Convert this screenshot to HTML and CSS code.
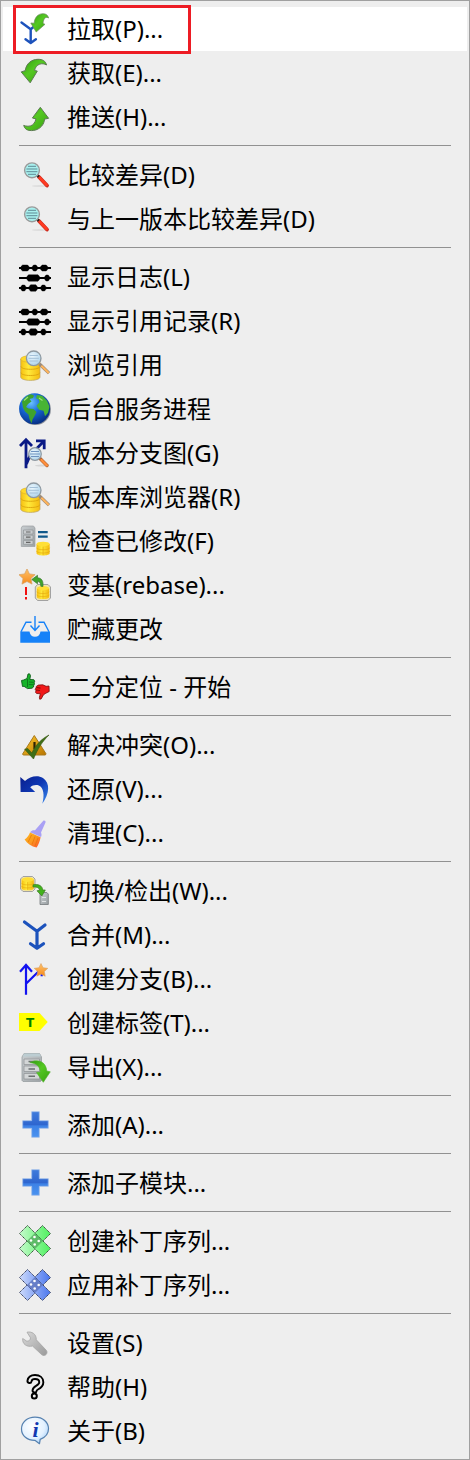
FILE: index.html
```html
<!DOCTYPE html>
<html lang="zh-CN">
<head>
<meta charset="utf-8">
<meta name="viewport" content="width=device-width, initial-scale=1">
<title>TortoiseGit</title>
<link rel="stylesheet" href="styles.css">
</head>
<body>
<svg class="sprite" aria-hidden="true">
  <defs>
    <linearGradient id="green" x1="0" y1="0" x2="1" y2="1"><stop offset="0" stop-color="#2f9a10"/><stop offset=".45" stop-color="#55c822"/><stop offset="1" stop-color="#37a010"/></linearGradient>
    <linearGradient id="gold" x1="0" x2="1" y1="0" y2="0"><stop offset="0" stop-color="#f6c010"/><stop offset=".4" stop-color="#ffe93a"/><stop offset="1" stop-color="#f4ba10"/></linearGradient>
    <linearGradient id="steel" x1="0" x2="1" y1="0" y2="1"><stop offset="0" stop-color="#c9ced1"/><stop offset="1" stop-color="#9ba1a4"/></linearGradient>
    <linearGradient id="star" x1="0" x2="0" y1="0" y2="1"><stop offset="0" stop-color="#ffc36a"/><stop offset="1" stop-color="#f58a1c"/></linearGradient>
    <linearGradient id="plus" x1="0" x2="0" y1="0" y2="1"><stop offset="0" stop-color="#3f7bdc"/><stop offset=".5" stop-color="#2f66cf"/><stop offset=".56" stop-color="#3d82e6"/><stop offset="1" stop-color="#4a93f0"/></linearGradient>
    <linearGradient id="undo" x1="0" x2="1" y1="0" y2="1"><stop offset="0" stop-color="#0a1f8e"/><stop offset=".5" stop-color="#0e38b4"/><stop offset="1" stop-color="#3c8cf0"/></linearGradient>
    <linearGradient id="bristle" x1="0" x2="1" y1="0" y2="1"><stop offset="0" stop-color="#ffb61c"/><stop offset=".5" stop-color="#fb9a20"/><stop offset="1" stop-color="#ff5030"/></linearGradient>
    <linearGradient id="warn" x1="0" x2="1" y1="0" y2="1"><stop offset="0" stop-color="#ffc92a"/><stop offset="1" stop-color="#b87400"/></linearGradient>
    <linearGradient id="wrench" x1="0" x2="1" y1="0" y2="1"><stop offset="0" stop-color="#d9d9d9"/><stop offset="1" stop-color="#9a9a9a"/></linearGradient>
    <radialGradient id="lens" cx=".4" cy=".35" r=".7"><stop offset="0" stop-color="#eaf6fd"/><stop offset="1" stop-color="#acd2ea"/></radialGradient>
    <radialGradient id="ocean" cx=".38" cy=".3" r=".75"><stop offset="0" stop-color="#6cc4ff"/><stop offset=".45" stop-color="#1667d6"/><stop offset="1" stop-color="#062a7c"/></radialGradient>
    <radialGradient id="bubble" cx=".4" cy=".35" r=".75"><stop offset="0" stop-color="#ffffff"/><stop offset=".6" stop-color="#e3f1ff"/><stop offset="1" stop-color="#9fcbf7"/></radialGradient>
    <linearGradient id="patch-green" x1="0" x2="1" y1="0" y2="0"><stop offset="0" stop-color="#c4fbcb"/><stop offset="1" stop-color="#4ff05f"/></linearGradient>
    <linearGradient id="patch-blue" x1="0" x2="1" y1="0" y2="0"><stop offset="0" stop-color="#ccdafc"/><stop offset="1" stop-color="#4a76ee"/></linearGradient>
  </defs>

  <symbol id="i-diff" viewBox="0 0 32 32">
    <ellipse cx="21" cy="27" rx="8" ry="1" fill="#dedede"/>
    <path d="M20 18 28 26.500" stroke="#c8281c" stroke-width="3.800" stroke-linecap="round"/>
    <path d="M20.500 18.500 27.600 26" stroke="#ff3b22" stroke-width="2.600" stroke-linecap="round"/>
    <path d="m18 16 1.800 1.800" stroke="#222" stroke-width="2.600"/>
    <circle cx="13" cy="11.300" r="7.400" fill="#a8f0ee" stroke="#9a9a9a" stroke-width="1.400"/>
    <path d="M9 7.300h8M7.400 10h11M7.400 12.700h11M9 15.300h8" stroke="#5f8a94" stroke-width="1"/>
  </symbol>

  <symbol id="i-log" viewBox="0 0 32 32">
    <path d="M0 7h32M0 17h32M0 27h32" stroke="#000" stroke-width="2"/>
    <path d="M3.600 4h5L10 5.500v3L8.600 10h-5L2 8.500v-3zM14.600 4H17l1.300 1.500v3L17 10h-2.400l-1.300-1.500v-3zM23.200 4h4l1.400 1.500v3L27.200 10h-4l-1.600-1.500v-3zM9.500 13.800H19l1.500 1.700v3L19 20.200H9.500L8 18.500v-3zM27 14h2.200l1.200 1.500v3L29.200 20H27l-1.200-1.500v-3zM3.200 24h2.400l1.200 1.500v3L5.600 30H3.200L2 28.500v-3zM11.600 23.800h5.200l1.400 1.600v3.200l-1.400 1.600h-5.200l-1.400-1.600v-3.200zM23.200 24h2.400l1.200 1.500v3L25.600 30h-2.400L22 28.500v-3z" fill="#000" stroke="#000" stroke-width=".4"/>
  </symbol>

  <symbol id="i-repo" viewBox="0 0 32 32">
    <path d="M1.700 10v18c0 2 4.300 3.400 9.700 3.400S21 30 21 28V10z" fill="url(#gold)" stroke="#b9a060" stroke-width=".7"/>
    <ellipse cx="11.400" cy="10" rx="9.700" ry="3.400" fill="#ffd92a" stroke="#d8ac30" stroke-width=".6"/>
    <path d="M2 17.300c0 2 4.300 3 9.400 3s9.400-1 9.400-3M2 23.500c0 2 4.300 3 9.400 3s9.400-1 9.400-3" fill="none" stroke="#dba40c" stroke-width=".9"/>
    <path d="m20.500 15 9.500 9.200" stroke="#9b8a7a" stroke-width="3.200"/>
    <path d="m22.300 16.800 7.500 7.200" stroke="#ffb45a" stroke-width="2"/>
    <circle cx="14.700" cy="9.300" r="7.300" fill="url(#lens)" stroke="#8e98a0" stroke-width="1.300"/>
    <path d="M10.500 6.500h8.400M9.500 9.300h10.400M10.500 12h8.400" stroke="#a3c0d8" stroke-width="1"/>
  </symbol>

  <symbol id="i-db" viewBox="0 0 16 16">
    <path d="M1 3v10c0 1.400 3 2.400 7 2.400s7-1 7-2.400V3z" fill="url(#gold)"/>
    <ellipse cx="8" cy="3" rx="7" ry="2.400" fill="#ffdf36"/>
    <path d="M1 7c0 1.400 3 2.200 7 2.200S15 8.400 15 7M1 10.500c0 1.400 3 2.200 7 2.200s7-.8 7-2.200M8 6v9" fill="none" stroke="#e6ae10" stroke-width=".8"/>
  </symbol>

  <symbol id="i-star" viewBox="-10 -10 20 20">
    <path d="m0-9 2.700 5.600 6.300.8-4.600 4.300 1.200 6.200L0 5l-5.600 2.900 1.200-6.200L-9-2.600l6.300-.8z" fill="url(#star)" stroke="#d8a060" stroke-width=".8"/>
  </symbol>

  <symbol id="i-plus" viewBox="0 0 32 32">
    <path d="M12.700 2.700h7.600v9h9v7.600h-9v9h-7.600v-9h-9v-7.600h9z" fill="url(#plus)" stroke="#9dbbe8" stroke-width=".8"/>
  </symbol>
</svg>

<ul class="menu" role="menu" aria-label="TortoiseGit">
  <li class="entry marked" role="none"><button class="item current" type="button" role="menuitem">
    <svg class="icon" viewBox="0 0 32 32" aria-hidden="true"><path d="m2.500 9.500 9.200 6.700 5-4M11.700 16v13.500M6.500 26.300l5.200 3.700 5.200-3.700" fill="none" stroke="#1c52bc" stroke-width="2.400" stroke-linecap="round" stroke-linejoin="round"/><path d="M29.600 5C27 3.400 24.500 4.800 24 10.500l2 .8L17.200 19l-5.400-9 3.400.2C15.500 4.500 19 .7 24 .7c3 0 5 1.500 5.600 4.300z" fill="url(#green)" stroke="#6d8a62" stroke-width=".7"/></svg>
    <span class="label">拉取(P)...</span></button></li>
  <li class="entry" role="none"><button class="item" type="button" role="menuitem">
    <svg class="icon" viewBox="0 0 32 32" aria-hidden="true"><path d="M27.500 8C23.500 5.500 17 6.500 15.500 13.500l2.800.6L11.200 25.800 2.200 14.900l4-1.200C7.200 6.500 12.500 2.300 19 2.300c4.500 0 7.700 1.700 8.500 5.700z" fill="url(#green)" stroke="#5c7a52" stroke-width="1"/></svg>
    <span class="label">获取(E)...</span></button></li>
  <li class="entry" role="none"><button class="item" type="button" role="menuitem">
    <svg class="icon" viewBox="0 0 32 32" aria-hidden="true"><path d="m21.300 6.300 8.300 11-4 .8c-.6 7.300-7 11.600-13.100 11.500-4.300 0-7-1.600-7.800-5.200 4.300 1.600 10.300 1.600 12.300-6.500L13.400 17z" fill="url(#green)" stroke="#5c7a52" stroke-width="1"/></svg>
    <span class="label">推送(H)...</span></button></li>
  <li class="separator" role="separator"></li>
  <li class="entry" role="none"><button class="item" type="button" role="menuitem"><svg class="icon" aria-hidden="true"><use href="#i-diff"/></svg><span class="label">比较差异(D)</span></button></li>
  <li class="entry" role="none"><button class="item" type="button" role="menuitem"><svg class="icon" aria-hidden="true"><use href="#i-diff"/></svg><span class="label">与上一版本比较差异(D)</span></button></li>
  <li class="separator" role="separator"></li>
  <li class="entry" role="none"><button class="item" type="button" role="menuitem"><svg class="icon" aria-hidden="true"><use href="#i-log"/></svg><span class="label">显示日志(L)</span></button></li>
  <li class="entry" role="none"><button class="item" type="button" role="menuitem"><svg class="icon" aria-hidden="true"><use href="#i-log"/></svg><span class="label">显示引用记录(R)</span></button></li>
  <li class="entry" role="none"><button class="item" type="button" role="menuitem"><svg class="icon" aria-hidden="true"><use href="#i-repo"/></svg><span class="label">浏览引用</span></button></li>
  <li class="entry" role="none"><button class="item" type="button" role="menuitem">
    <svg class="icon" viewBox="0 0 32 32" aria-hidden="true"><circle cx="16.400" cy="16.500" r="15.500" fill="#8d939c"/><circle cx="15.600" cy="15.800" r="15.500" fill="url(#ocean)"/><path d="M3 8.500C5.500 4.500 9 1.800 12 1.300l3 1.200-1 2.500-3.500 1 2 2.500-3.500 2.500-2 3 2.500 1.500 5 .5 3 3-2 4-2 3.500-1 4-2-4.500-1-4.500-3.500-3-2-4z" fill="#3fa32c"/><path d="m18 2 5 .8 5 5 2.500 6-1.500 6-3 3.500-1.500-5.500-4.500-1-2.500-4 3-3.500-1-3-2.500-1z" fill="#48b434"/><path d="M5 7.500 9 4M20 5l3.500 2.500" stroke="#9be07a" stroke-width="1.200"/></svg>
    <span class="label">后台服务进程</span></button></li>
  <li class="entry" role="none"><button class="item" type="button" role="menuitem">
    <svg class="icon" viewBox="0 0 32 32" aria-hidden="true"><path d="M7 31.300V3M1 9l6-6.200L13 9M17 3.800h8.200v8.500M24.500 4.600 11 18.500 7.500 27" fill="none" stroke="#0a1a86" stroke-width="2.800"/><ellipse cx="22" cy="28.600" rx="6" ry="1" fill="#d6d6d6"/><path d="m21 21.500 7 7" stroke="#b0602c" stroke-width="3.400" stroke-linecap="round"/><path d="m22.500 23 5.300 5.300" stroke="#ff8f3c" stroke-width="2.400" stroke-linecap="round"/><circle cx="16" cy="17" r="6.300" fill="url(#lens)" stroke="#8e98a0" stroke-width="1.200"/><path d="M12 14.500h8M11 17h10M12 19.500h8" stroke="#6e93c0" stroke-width="1.100"/></svg>
    <span class="label">版本分支图(G)</span></button></li>
  <li class="entry" role="none"><button class="item" type="button" role="menuitem"><svg class="icon" aria-hidden="true"><use href="#i-repo"/></svg><span class="label">版本库浏览器(R)</span></button></li>
  <li class="entry" role="none"><button class="item" type="button" role="menuitem">
    <svg class="icon" viewBox="0 0 32 32" aria-hidden="true"><path d="M3.500 1h11L16 3v18.500H2.300V3z" fill="url(#steel)" stroke="#9b9fa2" stroke-width=".7"/><path d="M4.500 5h9.500v4H4.500zM4.500 10.200h9.500v4H4.500zM4.500 15.400h9.500v4H4.500z" fill="#c9cdcf" stroke="#8f9396" stroke-width=".7"/><path d="M7 7h4.500M7 12.200h4.500M7 17.400h4.500" stroke="#666" stroke-width="1.200"/><path d="M19 7.200h9.700M19 11.700h9.700" stroke="#10588a" stroke-width="2.200"/><use href="#i-db" x="16.600" y="15.600" width="15" height="16"/></svg>
    <span class="label">检查已修改(F)</span></button></li>
  <li class="entry" role="none"><button class="item" type="button" role="menuitem">
    <svg class="icon" viewBox="0 0 32 32" aria-hidden="true"><use href="#i-star" x="-1" y="-1" width="18" height="18"/><path d="M7 18v8M7 28v2.400" stroke="#f01010" stroke-width="2"/><path d="M18.500 15.500H29l2.500 2.500v11L29 31.500H18.500L16.300 29V18z" fill="#efe3b0" stroke="#a2a2a2" stroke-width="1"/><use href="#i-db" x="17" y="16" width="14" height="15"/><path d="m12.800 10.500 5.700-4.200v2.500c4 .2 6 3 5.500 8.700l-2.200-.2c0-3.300-1-4.800-3.300-4.800v2.300z" fill="#3fa52a" stroke="#3d7530" stroke-width=".7"/></svg>
    <span class="label">变基(rebase)...</span></button></li>
  <li class="entry" role="none"><button class="item" type="button" role="menuitem">
    <svg class="icon" viewBox="0 0 32 32" aria-hidden="true"><path d="M12.500 9.200H7L2 18.800M19.500 9.200H25l5 9.600M16 3v14.500M11.500 12.500l4.500 5 4.500-5" fill="none" stroke="#1682f8" stroke-width="1.400"/><path d="M1.300 18.500h9.200c.5 3.600 2.500 5.200 5.500 5.200s5-1.600 5.500-5.200H31v11.300H1.300z" fill="#1682f8"/></svg>
    <span class="label">贮藏更改</span></button></li>
  <li class="separator" role="separator"></li>
  <li class="entry" role="none"><button class="item" type="button" role="menuitem">
    <svg class="icon" viewBox="0 0 32 32" aria-hidden="true"><path d="m2.500 9.500 2.200-.5L8 7.500l1-4.500 1.500-.2 1 1.700-.7 4 4 .2.900 1.500-.5 1.500.2 1.500-.7 1.300-.2 1.500-1.500 1.200-4.500.4-3.500-2.300-1.500.2z" fill="#14b428" stroke="#0f5c18" stroke-width=".9"/><path d="m10 11 4.700.3M9.800 13.500l4.800.3M8.500 8v8" stroke="#0b6a16" stroke-width=".8"/><path d="m30 15 .2 5.500-3.300 1.700-2.400 1.500-2.300 4.200-1.500.3-.3-2 1-3.500-3.800-.2-1.100-1.200.5-1.500-.8-1.500.8-1.300.3-1.600 2-1.300 4.500-.3 3.300 1.500z" fill="#f01818" stroke="#7a0c0c" stroke-width=".8"/><path d="m17.500 16.500 4 .7M17 19l4 .5" stroke="#8a0c0c" stroke-width="1.200"/></svg>
    <span class="label">二分定位 - 开始</span></button></li>
  <li class="separator" role="separator"></li>
  <li class="entry" role="none"><button class="item" type="button" role="menuitem">
    <svg class="icon" viewBox="0 0 32 32" aria-hidden="true"><path d="M15.300 6.500 27 24.800l-.6 1.200H4.200L3.600 25z" fill="url(#warn)" stroke="#a87a1c" stroke-width="1" stroke-linejoin="round"/><path d="M15.500 13v7" stroke="#2b2205" stroke-width="2.200"/><path d="m5.600 20.200 3.200-.7 4 4.500C17 15.500 22.500 9.800 30 6c-7 6.800-11 13.500-15.500 24z" fill="#3f6f18" stroke="#35550f" stroke-width=".6"/></svg>
    <span class="label">解决冲突(O)...</span></button></li>
  <li class="entry" role="none"><button class="item" type="button" role="menuitem">
    <svg class="icon" viewBox="0 0 32 32" aria-hidden="true"><path d="m1.300 3.900 4.700 4C11 3.300 18.500 1.600 24 5c7.500 5 6.500 16-.7 25.700 2.400-8.200 1.500-16.200-3.500-18.200-3-1-6.300-.3-8.600 1.700l5 4.800H1.600z" fill="url(#undo)"/></svg>
    <span class="label">还原(V)...</span></button></li>
  <li class="entry" role="none"><button class="item" type="button" role="menuitem">
    <svg class="icon" viewBox="0 0 32 32" aria-hidden="true"><path d="M24.500 3.500c1.500-.4 2.400.7 2 2L22 15.500c.7 1.500.7 3 0 4.500l-11-4.700c1.500-1.800 3-2.300 5-2z" fill="#a9a0f4"/><path d="m11 15.500 10.600 4.700c-.8 4-2 7.400-4 10.300C12.500 29.500 8.500 27 5.600 22.500c2.400-1.500 4.200-4 5.400-7z" fill="url(#bristle)"/><path d="m12.500 18-3.300 7M16 19.500l-3 8M19 21l-3 8" stroke="#e87808" stroke-width=".8"/></svg>
    <span class="label">清理(C)...</span></button></li>
  <li class="separator" role="separator"></li>
  <li class="entry" role="none"><button class="item" type="button" role="menuitem">
    <svg class="icon" viewBox="0 0 32 32" aria-hidden="true"><path d="M4 1.500h9.500L16 4v10l-2.500 2.500H4L1.500 14V4z" fill="#efe3b0" stroke="#a2a2a2" stroke-width="1"/><use href="#i-db" x="1.700" y="1.300" width="14" height="15"/><path d="M21.500 17.500h6.300l1.500 1.500v10.500H21V19z" fill="url(#steel)" stroke="#73787b" stroke-width=".8"/><path d="M23 22.500h4M23 26.500h4" stroke="#e0e3e4" stroke-width="1.200"/><path d="M14 9.800c5.500-1 9.500 1 9.700 5.200h2.600l-3.500 6-4.800-5.200 2.600-.5c-.3-2.600-2.600-3.600-6.600-3.300z" fill="#42b31c" stroke="#397a20" stroke-width=".7"/></svg>
    <span class="label">切换/检出(W)...</span></button></li>
  <li class="entry" role="none"><button class="item" type="button" role="menuitem">
    <svg class="icon" viewBox="0 0 32 32" aria-hidden="true"><path d="m5.500 3 12.500 9.300 8-6.300M18 12.500v16.700M11.500 24.700 18 29.300l6.500-4.600" fill="none" stroke="#1c52bc" stroke-width="3.200" stroke-linecap="round" stroke-linejoin="round"/></svg>
    <span class="label">合并(M)...</span></button></li>
  <li class="entry" role="none"><button class="item" type="button" role="menuitem">
    <svg class="icon" viewBox="0 0 32 32" aria-hidden="true"><path d="M7 31.700V2M1 8.700 7 2l6 6.700M7 20.700 19.500 8.500M22.700 10v3.200" fill="none" stroke="#1212f0" stroke-width="2.200"/><use href="#i-star" x="14.500" y="-.2" width="15" height="15"/></svg>
    <span class="label">创建分支(B)...</span></button></li>
  <li class="entry" role="none"><button class="item" type="button" role="menuitem">
    <svg class="icon" viewBox="0 0 32 32" aria-hidden="true"><path d="M0 6h20.500l8.200 9-8.200 9H0z" fill="#ff0"/><text class="tag-letter" x="11" y="19.500">T</text></svg>
    <span class="label">创建标签(T)...</span></button></li>
  <li class="entry" role="none"><button class="item" type="button" role="menuitem">
    <svg class="icon" viewBox="0 0 32 32" aria-hidden="true"><path d="M5 2.500h15.500L22.500 6v23.500l-1 1H4l-1-1V6z" fill="url(#steel)" stroke="#989ea1" stroke-width=".8"/><path d="M5 2.500h15.500l1.500 3H3.700z" fill="#bccdd2"/><path d="M5 8h15.500v5.500H5zM5 15h15.500v5.500H5zM5 22.500h15.500V28H5z" fill="#d3d6d7" stroke="#94989b" stroke-width=".8"/><path d="M9.500 10.500H16M9.500 18H16M9.500 25.300H16" stroke="#6b6f71" stroke-width="1.400"/><path d="M10.800 11.500c8-4 16.200-1 17 8.500l3.500.8-7 10.500-6.800-9.800 3.800-.6c-.3-5.500-4-8.600-10.500-9.400z" fill="url(#green)" stroke="#52b031" stroke-width=".6"/></svg>
    <span class="label">导出(X)...</span></button></li>
  <li class="separator" role="separator"></li>
  <li class="entry" role="none"><button class="item" type="button" role="menuitem"><svg class="icon" aria-hidden="true"><use href="#i-plus"/></svg><span class="label">添加(A)...</span></button></li>
  <li class="separator" role="separator"></li>
  <li class="entry" role="none"><button class="item" type="button" role="menuitem"><svg class="icon" aria-hidden="true"><use href="#i-plus"/></svg><span class="label">添加子模块...</span></button></li>
  <li class="separator" role="separator"></li>
  <li class="entry" role="none"><button class="item" type="button" role="menuitem">
    <svg class="icon" viewBox="0 0 32 32" aria-hidden="true"><g stroke="#34503a" stroke-width="1"><path d="m23.500.5 8 8-23 23-8-8z" fill="url(#patch-green)" stroke-dasharray="1.400 .6"/><path d="m8.500.5 23 23-8 8-23-23z" fill="url(#patch-green)" stroke-dasharray="1.400 .6"/></g><path d="m16 8 8 8-8 8-8-8z" fill="#56b060" opacity=".85"/><g fill="#fff"><circle cx="15.500" cy="12" r="1.300"/><circle cx="12" cy="15.500" r="1.300"/><circle cx="19.700" cy="16" r="1.300"/><circle cx="15.700" cy="19.500" r="1.300"/></g></svg>
    <span class="label">创建补丁序列...</span></button></li>
  <li class="entry" role="none"><button class="item" type="button" role="menuitem">
    <svg class="icon" viewBox="0 0 32 32" aria-hidden="true"><g stroke="#343e60" stroke-width="1"><path d="m23.500.5 8 8-23 23-8-8z" fill="url(#patch-blue)" stroke-dasharray="1.400 .6"/><path d="m8.500.5 23 23-8 8-23-23z" fill="url(#patch-blue)" stroke-dasharray="1.400 .6"/></g><path d="m16 8 8 8-8 8-8-8z" fill="#6078c0" opacity=".85"/><g fill="#fff"><circle cx="15.500" cy="12" r="1.300"/><circle cx="12" cy="15.500" r="1.300"/><circle cx="19.700" cy="16" r="1.300"/><circle cx="15.700" cy="19.500" r="1.300"/></g></svg>
    <span class="label">应用补丁序列...</span></button></li>
  <li class="separator" role="separator"></li>
  <li class="entry" role="none"><button class="item" type="button" role="menuitem">
    <svg class="icon" viewBox="0 0 32 32" aria-hidden="true"><path d="M8 5.200c4.500-1 9.500 1.600 9.300 7.600l10 10.500c2.200 3-1.300 6.800-4.500 4.500L13.500 19c-5.500 1.500-10.500-2-9.800-7.500l4 2.600c1.800.6 4-1.300 3.800-3.300z" fill="url(#wrench)" stroke="#a5a5a5" stroke-width=".8"/></svg>
    <span class="label">设置(S)</span></button></li>
  <li class="entry" role="none"><button class="item" type="button" role="menuitem">
    <svg class="icon" viewBox="0 0 32 32" aria-hidden="true"><path d="M10.500 10c.5-3 3-4 5.500-4 4 0 6.300 2 6.300 5.300 0 3-2.200 4.300-4.300 5.400-1.300.7-2.200 1.300-2.400 2.800" fill="none" stroke="#000" stroke-width="6" stroke-linecap="round" stroke-linejoin="round"/><path d="M10.500 10c.5-3 3-4 5.500-4 4 0 6.300 2 6.300 5.300 0 3-2.200 4.300-4.300 5.400-1.300.7-2.200 1.300-2.400 2.800" fill="none" stroke="#eee" stroke-width="2.200" stroke-linecap="round" stroke-linejoin="round"/><circle cx="15.300" cy="25" r="2.500" fill="#eee" stroke="#000" stroke-width="2"/></svg>
    <span class="label">帮助(H)</span></button></li>
  <li class="entry" role="none"><button class="item" type="button" role="menuitem">
    <svg class="icon" viewBox="0 0 32 32" aria-hidden="true"><path d="M16 2.200c7.800 0 13.500 5 13.500 11.600 0 4.800-3.300 8.700-8.300 10.600l-.7 4.300-4.300-3.300C8.300 25.600 2.500 20.700 2.500 14 2.500 7.200 8.200 2.200 16 2.200z" fill="url(#bubble)" stroke="#5581b0" stroke-width="1.200" stroke-linejoin="round"/><text class="info-letter" x="16.500" y="21.500">i</text></svg>
    <span class="label">关于(B)</span></button></li>
</ul>
</body>
</html>
```
FILE: styles.css
```css
*,
*::after {
  box-sizing: border-box;
}

body {
  margin: 0;
  background: #eee;
}

.sprite {
  position: absolute;
  width: 0;
  height: 0;
}

.menu {
  margin: 0;
  padding: 6px 2px;
  border: 1px solid #a0a0a0;
  background: #eee;
  list-style: none;
}

.entry {
  position: relative;
}

.item {
  display: flex;
  align-items: center;
  gap: 16px;
  width: 100%;
  height: 44px;
  margin: 0;
  padding: 0 16px;
  border: 0;
  background: transparent;
  color: #000;
  font-family: "Noto Sans", "Noto Sans CJK SC", sans-serif;
  font-size: 24px;
  line-height: 32px;
  text-align: left;
}

.item.current,
.item:hover {
  background: #fff;
}

.marked::after {
  content: "";
  position: absolute;
  z-index: 1;
  top: -2px;
  left: 10px;
  width: 178px;
  height: 49px;
  border: 3px solid #ed1c24;
  pointer-events: none;
}

.icon {
  flex: none;
  width: 32px;
  height: 32px;
}

.label {
  white-space: nowrap;
}

.separator {
  height: 1px;
  margin: 6px 16px 7px;
  background: #919191;
}

.tag-letter {
  fill: #008000;
  font: bold 12px "DejaVu Sans", sans-serif;
  text-anchor: middle;
}

.info-letter {
  fill: #1238b0;
  font: italic bold 22px "Liberation Serif", serif;
  text-anchor: middle;
}
```
